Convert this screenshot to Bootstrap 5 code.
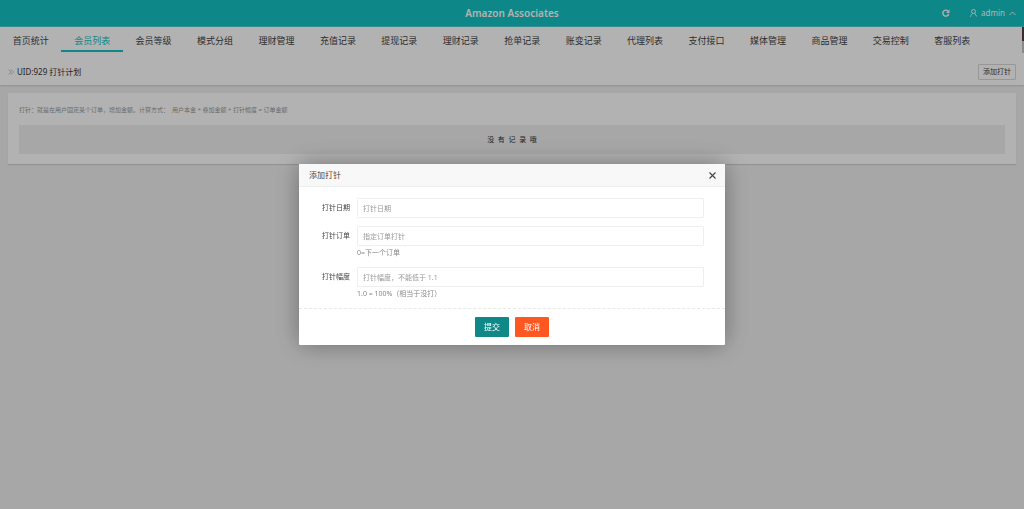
<!DOCTYPE html>
<html lang="zh-CN">
<head>
<meta charset="utf-8">
<meta name="viewport" content="width=device-width, initial-scale=1">
<title>Amazon Associates</title>
<link href="https://cdn.jsdelivr.net/npm/bootstrap@5.3.0/dist/css/bootstrap.min.css" rel="stylesheet">
<style>
  body { font-family: "Noto Sans", "Noto Sans CJK SC", sans-serif; font-size: 7px; line-height: 12px; background: #f0f0f0; color: #333; overflow: hidden; }
  a { text-decoration: none; }
  .topbar { height: 27px; background: #13c2c2; color: #fff; display: grid; grid-template-columns: 1fr auto 1fr; border-bottom: 1px solid #4fcaca; }
  .brand { font-size: 10px; font-weight: 600; color: #fff; }
  .user { font-size: 8px; color: #fff; }
  .user-tools { gap: 20px; }
  .main-nav { height: 26px; background: #fff; position: relative; }
  .main-nav .nav-item { flex: 0 0 6%; }
  .main-nav .nav-link { height: 25px; padding: 0; font-size: 9px; line-height: 27px; text-align: center; color: #444; white-space: nowrap; border-bottom: 2px solid transparent; }
  .main-nav .nav-link.active { color: #13c2c2; border-color: #13c2c2; }
  .scroll-mark { position: absolute; right: 0; top: 0; width: 2px; height: 26px; background: linear-gradient(#583f44 14px, #c4c4c4 14px); }
  .page-title { height: 32px; padding: 6px 8px 0; background: #fff; box-shadow: 0 1px 2px rgba(0,0,0,.15); }
  .page-title h1 { font-size: 8px; line-height: 12px; gap: 3px; }
  .chev { color: #aaa; }
  .add-btn { font-size: 7px; line-height: 12px; padding: 1px 4px; border: 1px solid #d8d8d8; border-radius: 1px; background: #fff; color: #444; }
  .panel { margin: 8px; padding: 11px 11px 10px; background: #fff; box-shadow: 0 1px 1px rgba(0,0,0,.12); }
  .tip { font-size: 6px; color: #999; margin-bottom: 9px; }
  .empty { height: 29px; background: #f0f0f0; }
  .modal-backdrop { --bs-backdrop-opacity: .3; }
  .modal-dialog { max-width: 426px; }
  .modal-content { border: 0; border-radius: 1px; box-shadow: 0 0 25px rgba(0,0,0,.35); color: #444; }
  .modal-header { height: 23px; padding: 0 9px 0 10px; background: #f8f8f8; border-bottom: 1px solid #eee; border-radius: 0; }
  .modal-title { font-size: 8px; font-weight: 400; line-height: 12px; }
  .close-btn { padding: 0; border: 0; background: none; line-height: 0; color: #444; }
  .modal-body { padding: 11px 21px 8px 20px; }
  .field { display: grid; grid-template-columns: 31px 1fr; column-gap: 7px; }
  .field label { line-height: 20px; text-align: right; white-space: nowrap; }
  .field .form-control { height: 20px; min-height: 0; padding: 0 5px; font-size: 7px; line-height: 18px; border: 1px solid #eee; border-radius: 1px; }
  .field .form-control::placeholder { color: #999; }
  .hint { color: #888; margin-top: 1px; }
  .modal-footer { padding: 8px 0; border-top: 1px dashed #e8e8e8; gap: 6px; }
  .modal-footer > * { margin: 0; }
  .act { height: 20px; width: 34px; padding: 0; font-size: 8px; line-height: 18px; border: 0; border-radius: 1px; color: #fff; }
  .act-ok, .act-ok:hover { background: #0f8888; color: #fff; }
  .act-no, .act-no:hover { background: #ff5722; color: #fff; }
</style>
</head>
<body>
<header class="topbar align-items-center">
  <span></span>
  <a class="brand" href="#">Amazon Associates</a>
  <div class="user-tools d-flex justify-content-end align-items-center pe-2">
    <a href="#" class="user d-flex" aria-label="刷新"><svg width="8" height="8" viewBox="0 0 16 16" fill="none" stroke="currentColor" stroke-width="2.8"><path d="M13.500 10A6 6 0 1 1 12 4"/><path d="M15 1v7H8z" fill="currentColor" stroke="none"/></svg></a>
    <a href="#" class="user d-flex align-items-center">
      <svg width="7" height="8" viewBox="0 0 14 16" fill="none" stroke="currentColor" stroke-width="1.8"><circle cx="7" cy="5" r="4"/><path d="M1 15.500C1.500 12 3.500 9.800 5.500 9M9.500 8.500l4 6.500"/></svg>
      <span class="ms-1 me-1">admin</span>
      <svg width="7" height="7" viewBox="0 0 14 14" fill="none" stroke="currentColor" stroke-width="1.8"><path d="M1 10l6-6 6 6"/></svg>
    </a>
  </div>
</header>
<nav class="main-nav">
  <ul class="nav flex-nowrap">
    <li class="nav-item"><a class="nav-link" href="#">首页统计</a></li>
    <li class="nav-item"><a class="nav-link active" href="#">会员列表</a></li>
    <li class="nav-item"><a class="nav-link" href="#">会员等级</a></li>
    <li class="nav-item"><a class="nav-link" href="#">模式分组</a></li>
    <li class="nav-item"><a class="nav-link" href="#">理财管理</a></li>
    <li class="nav-item"><a class="nav-link" href="#">充值记录</a></li>
    <li class="nav-item"><a class="nav-link" href="#">提现记录</a></li>
    <li class="nav-item"><a class="nav-link" href="#">理财记录</a></li>
    <li class="nav-item"><a class="nav-link" href="#">抢单记录</a></li>
    <li class="nav-item"><a class="nav-link" href="#">账变记录</a></li>
    <li class="nav-item"><a class="nav-link" href="#">代理列表</a></li>
    <li class="nav-item"><a class="nav-link" href="#">支付接口</a></li>
    <li class="nav-item"><a class="nav-link" href="#">媒体管理</a></li>
    <li class="nav-item"><a class="nav-link" href="#">商品管理</a></li>
    <li class="nav-item"><a class="nav-link" href="#">交易控制</a></li>
    <li class="nav-item"><a class="nav-link" href="#">客服列表</a></li>
  </ul>
  <span class="scroll-mark"></span>
</nav>
<div class="page-title d-flex align-items-center justify-content-between">
  <h1 class="m-0 fw-normal d-flex align-items-center"><svg class="chev" width="6" height="6" viewBox="0 0 12 12" fill="none" stroke="currentColor" stroke-width="1.4"><path d="M1 1l5 5-5 5M6 1l5 5-5 5"/></svg>UID:929 打针计划</h1>
  <button type="button" class="add-btn">添加打针</button>
</div>
<main class="panel">
  <p class="tip">打针：就是在用户固定某个订单，增加金额。计算方式：&nbsp; 用户本金 * 叠加金额 * 打针幅度 = 订单金额</p>
  <div class="empty d-flex align-items-center justify-content-center">没&nbsp; 有&nbsp; 记&nbsp; 录&nbsp; 哦</div>
</main>

<div class="modal-backdrop show"></div>
<div class="modal show d-block" tabindex="-1" role="dialog" aria-labelledby="dlgTitle">
  <div class="modal-dialog modal-dialog-centered">
    <form class="modal-content">
      <div class="modal-header justify-content-between">
        <h2 class="modal-title" id="dlgTitle">添加打针</h2>
        <button type="button" class="close-btn" aria-label="关闭"><svg width="7" height="7" viewBox="0 0 14 14" fill="none" stroke="currentColor" stroke-width="2.2"><path d="M1 1l12 12M13 1L1 13"/></svg></button>
      </div>
      <div class="modal-body">
        <div class="field mb-2">
          <label for="d1">打针日期</label>
          <div><input id="d1" class="form-control" placeholder="打针日期"></div>
        </div>
        <div class="field mb-2">
          <label for="d2">打针订单</label>
          <div><input id="d2" class="form-control" placeholder="指定订单打针"><div class="hint">0=下一个订单</div></div>
        </div>
        <div class="field">
          <label for="d3">打针幅度</label>
          <div><input id="d3" class="form-control" placeholder="打针幅度，不能低于 1.1"><div class="hint">1.0 = 100%（相当于没打）</div></div>
        </div>
      </div>
      <div class="modal-footer justify-content-center">
        <button type="submit" class="btn act act-ok">提交</button>
        <button type="button" class="btn act act-no">取消</button>
      </div>
    </form>
  </div>
</div>
<script src="https://cdn.jsdelivr.net/npm/bootstrap@5.3.0/dist/js/bootstrap.bundle.min.js"></script>
</body>
</html>
